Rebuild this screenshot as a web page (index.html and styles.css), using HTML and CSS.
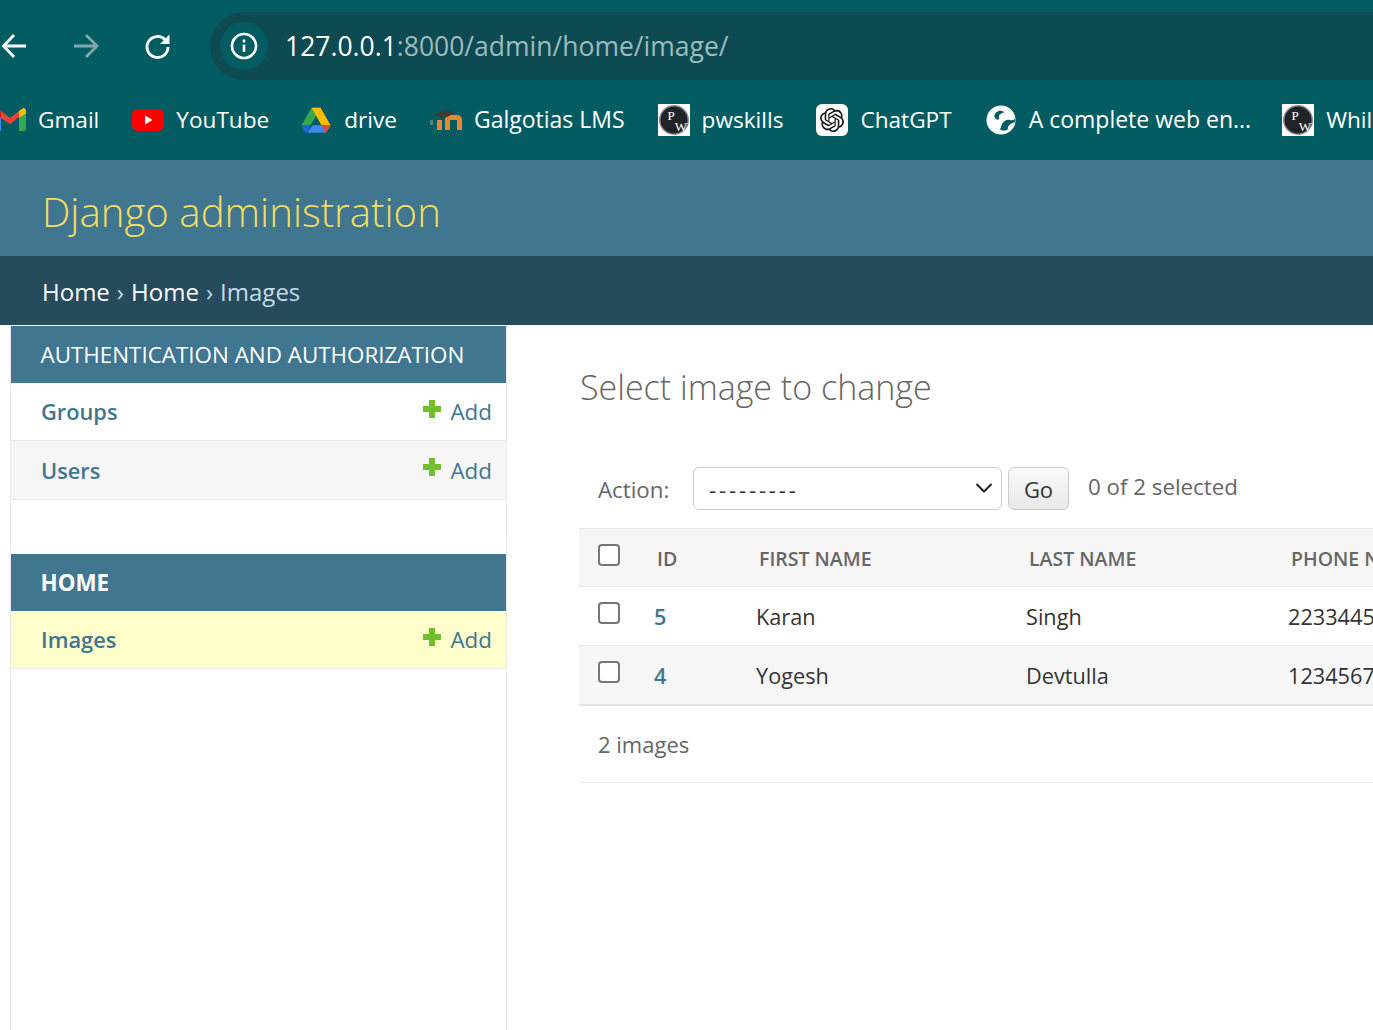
FILE: index.html
```html
<!DOCTYPE html>
<html>
<head>
    <title>Select image to change | Django site admin</title>
    <link rel="stylesheet" href="styles.css">
</head>
<body>
    <!-- browser toolbar -->
    <div class="toolbar">
        <div class="nav-row">
            <svg class="nav-icon back" viewBox="0 0 26 26"><path d="M25 13H2.500M13 2 2.500 13 13 24" /></svg>
            <svg class="nav-icon forward" viewBox="0 0 26 26"><path d="M2 13h23M14 2l11 11-11 11" /></svg>
            <svg class="nav-icon reload" viewBox="0 0 26 26"><path d="M23 14a10.500 10.500 0 1 1-3-7.400L23 10" /><path class="solid" d="M24.500 1.500v9.500H15z" /></svg>
            <div class="address">
                <span class="info-pill">
                    <svg class="info-icon" viewBox="0 0 28 28"><circle cx="14" cy="14" r="12" /><path d="M14 12.500V20M14 7.500v3" /></svg>
                </span>
                <span class="url"><span class="host">127.0.0.1</span>:8000/admin/home/image/</span>
            </div>
        </div>
        <div class="bookmarks">
            <a class="bookmark gmail">
                <svg class="bm-icon" viewBox="0 0 32 32">
                    <path fill="#4285f4" d="M0 7h7v20H2a2 2 0 0 1-2-2z" />
                    <path fill="#34a853" d="M25 7h7v18a2 2 0 0 1-2 2h-5z" />
                    <path fill="#ea4335" d="M0 9.500 16 20 25 13V7l-9 7L7 7 3.500 4.500C2 3.500 0 4.500 0 7z" />
                    <path fill="#fbbc04" d="M25 7l3.500-2.500C30 3.500 32 4.500 32 7v2.500L25 14z" />
                    <path fill="#c5221f" d="M0 7c0-2.500 2-3.500 3.500-2.500L7 7v7L0 9.500z" />
                </svg>
                Gmail
            </a>
            <a class="bookmark">
                <svg class="bm-icon" viewBox="0 0 32 32">
                    <rect x="0" y="5" width="32" height="22" rx="6" fill="#f00" />
                    <path fill="#fff" d="M13 11.500v9l7.500-4.500z" />
                </svg>
                YouTube
            </a>
            <a class="bookmark tight">
                <svg class="bm-icon" viewBox="0 0 32 32">
                    <g transform="translate(1.500 2) scale(.91 .92)">
                        <path fill="#34a853" d="M11 2h10L10 21H0z" />
                        <path fill="#fbbc04" d="M21 2l11 19H22L11 2z" />
                        <path fill="#4285f4" d="M6.500 29 12 21h20l-4 6.500a3 3 0 0 1-2.500 1.500z" />
                        <path fill="#1967d2" d="M0 21h10l-3.500 8H5a3 3 0 0 1-2.500-1.500z" />
                        <path fill="#ea4335" d="M22 21h10l-4 6.500a3 3 0 0 1-1.500 1.300z" />
                    </g>
                </svg>
                drive
            </a>
            <a class="bookmark wide">
                <svg class="bm-icon" viewBox="0 0 32 32">
                    <rect x="0" y="16" width="3" height="5" fill="#5f8069" />
                    <path fill="#e6872b" d="M7 16h5v10H7zM15 26V14c0-2 2-3 4-3h8c3 0 5 2 5 5v10h-5V16h-7v10z" />
                    <path fill="#3d3a3a" d="M3 11 16 6l9 3-10 5-7-1.500z" />
                </svg>
                Galgotias LMS
            </a>
            <a class="bookmark">
                <svg class="bm-icon" viewBox="0 0 32 32">
                    <rect width="32" height="32" fill="#fff" />
                    <circle cx="16" cy="16" r="15" fill="#8a8a8a" />
                    <circle cx="16" cy="16" r="13.500" fill="#1f2326" />
                    <text class="pw-letter" x="9.500" y="16">P</text>
                    <text class="pw-letter" x="16.800" y="26.500">W</text>
                </svg>
                pwskills
            </a>
            <a class="bookmark">
                <svg class="bm-icon" viewBox="0 0 32 32">
                    <rect width="32" height="32" rx="6" fill="#fff" />
                    <path transform="translate(4 4)" fill="#111" d="M22.2819 9.8211a5.9847 5.9847 0 0 0-.5157-4.9108 6.0462 6.0462 0 0 0-6.5098-2.9A6.0651 6.0651 0 0 0 4.9807 4.1818a5.9847 5.9847 0 0 0-3.9977 2.9 6.0462 6.0462 0 0 0 .7427 7.0966 5.98 5.98 0 0 0 .511 4.9107 6.051 6.051 0 0 0 6.5146 2.9001A5.9847 5.9847 0 0 0 13.2599 24a6.0557 6.0557 0 0 0 5.7718-4.2058 5.9894 5.9894 0 0 0 3.9977-2.9001 6.0557 6.0557 0 0 0-.7475-7.0729zm-9.022 12.6081a4.4755 4.4755 0 0 1-2.8764-1.0408l.1419-.0804 4.7783-2.7582a.7948.7948 0 0 0 .3927-.6813v-6.7369l2.02 1.1686a.071.071 0 0 1 .038.052v5.5826a4.504 4.504 0 0 1-4.4945 4.4944zm-9.6607-4.1254a4.4708 4.4708 0 0 1-.5346-3.0137l.142.0852 4.783 2.7582a.7712.7712 0 0 0 .7806 0l5.8428-3.3685v2.3324a.0804.0804 0 0 1-.0332.0615L9.74 19.9502a4.4992 4.4992 0 0 1-6.1408-1.6464zM2.3408 7.8956a4.485 4.485 0 0 1 2.3655-1.9728V11.6a.7664.7664 0 0 0 .3879.6765l5.8144 3.3543-2.0201 1.1685a.0757.0757 0 0 1-.071 0l-4.8303-2.7865A4.504 4.504 0 0 1 2.3408 7.872zm16.5963 3.8558L13.1038 8.364 15.1192 7.2a.0757.0757 0 0 1 .071 0l4.8303 2.7913a4.4944 4.4944 0 0 1-.6765 8.1042v-5.6772a.79.79 0 0 0-.407-.667zm2.0107-3.0231l-.142-.0852-4.7735-2.7818a.7759.7759 0 0 0-.7854 0L9.409 9.2297V6.8974a.0662.0662 0 0 1 .0284-.0615l4.8303-2.7866a4.4992 4.4992 0 0 1 6.6802 4.66zM8.3065 12.863l-2.02-1.1638a.0804.0804 0 0 1-.038-.0567V6.0742a4.4992 4.4992 0 0 1 7.3757-3.4537l-.142.0805L8.704 5.459a.7948.7948 0 0 0-.3927.6813zm1.0976-2.3654l2.602-1.4998 2.6069 1.4998v2.9994l-2.5974 1.4997-2.6067-1.4997Z" />
                </svg>
                ChatGPT
            </a>
            <a class="bookmark wide">
                <svg class="bm-icon" viewBox="0 0 32 32">
                    <circle cx="16" cy="16" r="14.500" fill="#fff" />
                    <path fill="#045c63" d="M15 6.500C10 8 7.500 12 11 15c2 1.500 4 .5 3-2-.5-2 2-4 6-5zM30 15c-4 3-6-1-10 2-4 2-3 5-5 8 2 2 6 2 8 0-1-3 2-5 7-7z" />
                </svg>
                A complete web en...
            </a>
            <a class="bookmark tight">
                <svg class="bm-icon" viewBox="0 0 32 32">
                    <rect width="32" height="32" fill="#fff" />
                    <circle cx="16" cy="16" r="15" fill="#8a8a8a" />
                    <circle cx="16" cy="16" r="13.500" fill="#1f2326" />
                    <text class="pw-letter" x="9.500" y="16">P</text>
                    <text class="pw-letter" x="16.800" y="26.500">W</text>
                </svg>
                While
            </a>
        </div>
    </div>

    <!-- django header -->
    <div id="header">
        <h1 class="branding">Django administration</h1>
    </div>
    <div class="breadcrumbs">
        <a>Home</a> <span class="sep">›</span> <a>Home</a> <span class="sep">›</span> <span class="current">Images</span>
    </div>

    <div class="content-wrap">
        <div class="sidebar">
            <div class="module">
                <div class="caption">AUTHENTICATION AND AUTHORIZATION</div>
                <div class="app-row">
                    <a class="model">Groups</a>
                    <a class="add"><span class="plus"></span>Add</a>
                </div>
                <div class="app-row alt">
                    <a class="model">Users</a>
                    <a class="add"><span class="plus"></span>Add</a>
                </div>
            </div>
            <div class="module">
                <div class="caption strong">HOME</div>
                <div class="app-row selected">
                    <a class="model">Images</a>
                    <a class="add"><span class="plus"></span>Add</a>
                </div>
            </div>
        </div>

        <div class="main">
            <h2 class="page-title">Select image to change</h2>
            <div class="actions">
                <label class="action-label">Action:</label>
                <div class="select-wrap">
                    <select class="action-select"><option>---------</option></select>
                    <svg class="chevron" viewBox="0 0 18 12"><path d="M1.500 2 9 9.500 16.500 2" /></svg>
                </div>
                <button class="go" type="button">Go</button>
                <span class="counter">0 of 2 selected</span>
            </div>
            <table class="result-list">
                <colgroup>
                    <col class="col-check">
                    <col class="col-id">
                    <col class="col-first">
                    <col class="col-last">
                    <col class="col-phone">
                </colgroup>
                <thead>
                    <tr>
                        <th><input class="check" type="checkbox"></th>
                        <th>ID</th>
                        <th>FIRST NAME</th>
                        <th>LAST NAME</th>
                        <th>PHONE NUMBER</th>
                    </tr>
                </thead>
                <tbody>
                    <tr>
                        <td><input class="check" type="checkbox"></td>
                        <td><a class="row-id">5</a></td>
                        <td>Karan</td>
                        <td>Singh</td>
                        <td>2233445566</td>
                    </tr>
                    <tr class="alt">
                        <td><input class="check" type="checkbox"></td>
                        <td><a class="row-id">4</a></td>
                        <td>Yogesh</td>
                        <td>Devtulla</td>
                        <td>1234567890</td>
                    </tr>
                </tbody>
            </table>
            <p class="paginator">2 images</p>
        </div>
    </div>
</body>
</html>
```

FILE: styles.css
```css
/* General body styles */
html, body {
    height: 100%;
}

body {
    margin: 0;
    width: 1373px;
    height: 1030px;
    overflow: hidden;
    background-color: #fff;
    color: #333;
    font-family: "Open Sans", "Noto Sans", sans-serif;
    display: flex;
    flex-direction: column;
}

/* Browser toolbar */
.toolbar {
    height: 160px;
    flex: none;
    background-color: #045c63;
    overflow: hidden;
}

.nav-row {
    height: 68px;
    padding-top: 12px;
    display: flex;
    align-items: center;
}

.nav-icon {
    width: 26px;
    height: 26px;
    flex: none;
    fill: none;
    stroke: #fff;
    stroke-width: 2.800;
    overflow: visible;
}

.nav-icon .solid {
    fill: #fff;
    stroke: none;
}

.back {
    margin-left: 1px;
}

.forward {
    margin-left: 45px;
    stroke: #7fa9ac;
}

.reload {
    margin-left: 47px;
}

.address {
    margin-left: 39px;
    flex: 1;
    height: 68px;
    background-color: #0e4a52;
    border-radius: 34px 0 0 34px;
    display: flex;
    align-items: center;
    padding-left: 10px;
    font-size: 26.500px;
    color: #9cbcbe;
}

.info-pill {
    width: 48px;
    height: 48px;
    border-radius: 50%;
    background-color: #045c63;
    display: flex;
    align-items: center;
    justify-content: center;
}

.info-icon {
    width: 28px;
    height: 28px;
    fill: none;
    stroke: #fff;
    stroke-width: 2.600;
}

.url {
    margin-left: 17px;
    margin-bottom: 1px;
}

.host {
    color: #fff;
}

.bookmarks {
    height: 78px;
    padding-bottom: 2px;
    display: flex;
    align-items: center;
    gap: 33px;
    margin-left: -6px;
    white-space: nowrap;
}

.bookmark {
    display: flex;
    align-items: center;
    gap: 12px;
    color: #fff;
    font-size: 22.600px;
}

.bookmark.tight {
    margin-left: -2px;
}

.bookmark.wide {
    font-size: 23px;
}

.bm-icon {
    width: 32px;
    height: 32px;
    flex: none;
    margin-top: 2px;
}

.pw-letter {
    fill: #fff;
    font-family: "Liberation Serif", serif;
    font-size: 13px;
}

/* Header styles */
#header {
    height: 96px;
    flex: none;
    background-color: #417690;
    display: flex;
    align-items: center;
    padding-left: 42px;
}

.branding {
    margin: 6px 0 0;
    font-size: 40.200px;
    font-weight: 300;
    color: #f5dd5d;
}

.breadcrumbs {
    box-sizing: border-box;
    height: 69px;
    flex: none;
    background-color: #264b5d;
    display: flex;
    align-items: center;
    gap: 7px;
    padding: 2px 0 0 42px;
    font-size: 24px;
    color: #fff;
}

.breadcrumbs .sep {
    color: #c4dce8;
}

.breadcrumbs .current {
    color: #c4dce8;
}

/* Sidebar and main columns */
.content-wrap {
    flex: 1;
    display: flex;
    min-height: 0;
}

.sidebar {
    width: 495px;
    flex: none;
    margin-left: 10px;
    padding-top: 1px;
    border-left: 1px solid #eaeaea;
    border-right: 1px solid #eaeaea;
}

.module {
    margin-bottom: 54px;
}

.caption {
    box-sizing: border-box;
    height: 57px;
    background-color: #417690;
    color: #fff;
    font-size: 22.400px;
    display: flex;
    align-items: center;
    padding: 0 0 1px 29.500px;
}

.caption.strong {
    font-weight: 700;
    color: #fff;
    background-color: #417690;
}

.app-row {
    height: 56px;
    display: flex;
    align-items: center;
    justify-content: space-between;
    padding: 0 14px 1px 30px;
    border-bottom: 1px solid #eaeaea;
    font-size: 21.800px;
    color: #417690;
}

.app-row.alt {
    height: 58px;
    padding-bottom: 0;
    background-color: #f6f6f6;
}

.app-row.selected {
    background-color: #ffc;
}

.model {
    font-weight: 600;
}

.add {
    display: flex;
    align-items: center;
    font-size: 22.400px;
}

.plus {
    width: 18px;
    height: 18px;
    margin-right: 9px;
    margin-top: -5px;
    background:
        linear-gradient(#70bf2b, #70bf2b) center / 18px 6px no-repeat,
        linear-gradient(#70bf2b, #70bf2b) center / 6px 18px no-repeat;
    border-radius: 2px;
}

.app-row.alt .plus {
    margin-top: -7px;
}

.main {
    flex: 1;
    min-width: 0;
    padding-left: 72px;
}

.page-title {
    margin: 37px 0 0 1px;
    height: 50px;
    line-height: 50px;
    font-size: 34px;
    font-weight: 300;
    color: #666;
    white-space: nowrap;
}

/* Action bar */
.actions {
    margin-top: 55px;
    height: 61px;
    padding-left: 19px;
    display: flex;
    align-items: flex-start;
    font-size: 22.300px;
    color: #666;
    white-space: nowrap;
}

.action-label {
    margin-top: 7px;
    width: 95px;
}

.select-wrap {
    position: relative;
}

.action-select {
    appearance: none;
    width: 309px;
    height: 43px;
    border: 1px solid #ccc;
    border-radius: 6px;
    background-color: #fff;
    padding-left: 15px;
    font-family: inherit;
    font-size: 22px;
    letter-spacing: 2.900px;
    color: #333;
}

.chevron {
    position: absolute;
    right: 9px;
    top: 15px;
    width: 18px;
    height: 12px;
    fill: none;
    stroke: #222;
    stroke-width: 2;
}

.go {
    margin-left: 6px;
    width: 61px;
    height: 43px;
    padding: 0;
    border: 1px solid #ccc;
    border-radius: 6px;
    background: linear-gradient(#fafafa, #e8e8e8);
    font-family: inherit;
    font-size: 22px;
    color: #333;
}

.counter {
    margin-left: 19px;
    margin-top: 4px;
}

/* Result table */
.result-list {
    width: 1000px;
    border-collapse: collapse;
    table-layout: fixed;
    font-size: 21.700px;
    white-space: nowrap;
}

.col-check {
    width: 56px;
}

.col-id {
    width: 102px;
}

.col-first {
    width: 270px;
}

.col-last {
    width: 262px;
}

.result-list th {
    box-sizing: border-box;
    height: 58px;
    padding: 2px 0 0 22px;
    background-color: #f6f6f6;
    border-top: 1px solid #eaeaea;
    border-bottom: 1px solid #eaeaea;
    text-align: left;
    font-size: 19.500px;
    font-weight: 600;
    color: #666;
    overflow: hidden;
}

.result-list td {
    height: 58px;
    padding: 0 0 0 19px;
    border-bottom: 1px solid #eaeaea;
    color: #333;
    overflow: hidden;
}

.result-list tbody tr:last-child td {
    border-bottom: 2px solid #e4e4e4;
}

.result-list tr.alt td {
    background-color: #f6f6f6;
}

.result-list th:first-child,
.result-list td:first-child {
    padding: 0 0 0 19px;
    vertical-align: top;
}

.row-id {
    color: #417690;
    font-weight: 600;
}

.check {
    appearance: none;
    display: block;
    width: 22px;
    height: 22px;
    margin: 15px 0 0;
    border: 2px solid #767676;
    border-radius: 4px;
    background-color: #fff;
}

.paginator {
    margin: 0;
    height: 76px;
    line-height: 76px;
    padding-left: 19px;
    width: 1000px;
    border-bottom: 1px solid #eaeaea;
    font-size: 22px;
    color: #666;
}
```
